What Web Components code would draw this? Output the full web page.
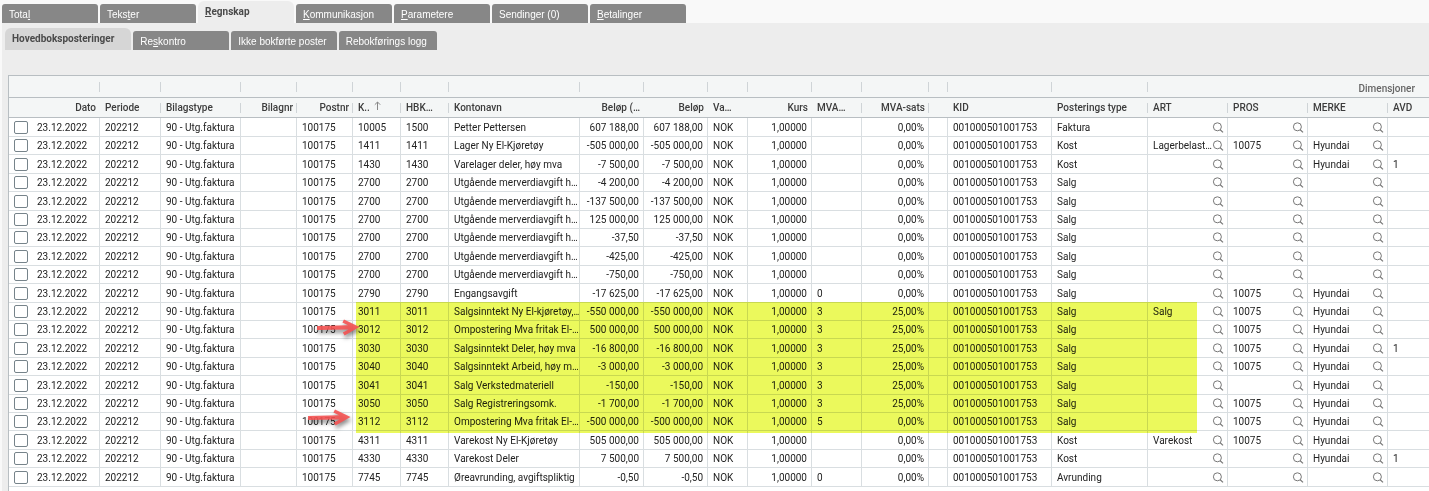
<!DOCTYPE html>
<html lang="no">
<head>
<meta charset="utf-8">
<title>Regnskap</title>
<style>
  html, body {
    margin: 0;
    height: 100%;
  }
  body {
    font: 10px/14px Roboto, "Liberation Sans", sans-serif;
    color: #222;
    background: #f9f9f9;
  }
</style>
</head>
<body>
<ledger-page>
  <tab-strip slot="main">
    <tab-item>Tota<u>l</u></tab-item>
    <tab-item>Teks<u>t</u>er</tab-item>
    <tab-item active><u>R</u>egnskap</tab-item>
    <tab-item><u>K</u>ommunikasjon</tab-item>
    <tab-item><u>P</u>arametere</tab-item>
    <tab-item>Sendinger (0)</tab-item>
    <tab-item><u>B</u>etalinger</tab-item>
  </tab-strip>
  <tab-strip slot="sub" level="2">
    <tab-item active>Hovedboksposteringer</tab-item>
    <tab-item>Re<u>s</u>kontro</tab-item>
    <tab-item>Ikke bokførte poster</tab-item>
    <tab-item>Rebokførings logg</tab-item>
  </tab-strip>
  <posting-grid>
    <marker-box style="left: 347px; top: 226px; width: 841px; height: 131px"></marker-box>
    <marker-arrow style="left: 308px; top: 242px"></marker-arrow>
    <marker-arrow style="left: 299px; top: 332px"></marker-arrow>
  </posting-grid>
</ledger-page>

<script>
class LedgerPage extends HTMLElement {
    constructor() {
        super();
        this.attachShadow({ mode: 'open' });
        this.shadowRoot.innerHTML = `
        <style>
        :host {
            display: flex;
            flex-direction: column;
            box-sizing: border-box;
            min-height: 100%;
            padding-left: 2px;
            overflow: hidden;
        }
        main {
            flex: 1;
            display: flex;
            flex-direction: column;
            gap: 25px;
            padding: 5px 0 0 6px;
            background: #ededed;
        }
        .sub {
            margin-left: -3px;
        }
        </style>
        <slot name="main"></slot>
        <main>
            <div class="sub"><slot name="sub"></slot></div>
            <slot></slot>
        </main>
        `;
    }
}

class TabStrip extends HTMLElement {
    constructor() {
        super();
        this.attachShadow({ mode: 'open' });
        this.shadowRoot.innerHTML = `
        <style>
        :host {
            display: flex;
            align-items: flex-end;
            gap: 2px;
            height: 23px;
            --active-bg: #ededed;
        }
        :host([level="2"]) {
            height: 22px;
            --active-bg: #d6d6d6;
        }
        </style>
        <slot></slot>
        `;
    }
}

class TabItem extends HTMLElement {
    constructor() {
        super();
        this.attachShadow({ mode: 'open' });
        this.shadowRoot.innerHTML = `
        <style>
        :host {
            display: block;
        }
        button {
            display: block;
            box-sizing: border-box;
            min-width: 96px;
            height: 19px;
            margin: 0;
            padding: 3px 10px 0 7px;
            border: 0;
            border-radius: 3px 3px 0 0;
            background: #878787;
            color: #fff;
            font: 10px/14px "Liberation Sans", Arial, sans-serif;
            text-align: left;
            white-space: nowrap;
        }
        :host([active]) button {
            height: 22px;
            padding: 0 17px 1px 7px;
            border-radius: 6px 6px 0 0;
            background: var(--active-bg);
            color: #4a4a4a;
            font: 700 10px/14px Roboto, sans-serif;
        }
        </style>
        <button type="button"><slot></slot></button>
        `;
    }
}

// [title, width, align, separator in the title row]
const columns = [
    ['Dato', 91, 'right', false],
    ['Periode', 61, 'left', true],
    ['Bilagstype', 80, 'left', true],
    ['Bilagnr', 56, 'right', true],
    ['Postnr', 56, 'right', true],
    ['K..', 48, 'left', true],
    ['HBK…', 48, 'left', true],
    ['Kontonavn', 131, 'left', false],
    ['Beløp (…', 64, 'right', false],
    ['Beløp', 64, 'right', false],
    ['Va…', 40, 'left', false],
    ['Kurs', 64, 'right', false],
    ['MVA…', 50, 'left', true],
    ['MVA-sats', 67, 'right', true],
    ['', 19, 'left', false],
    ['KID', 104, 'left', false],
    ['Posterings type', 96, 'left', true],
    ['ART', 80, 'left', true],
    ['PROS', 80, 'left', true],
    ['MERKE', 80, 'left', true],
    ['AVD', 0, 'left', false],
];

// account, main account, name, amount, VAT code, VAT rate, type, ART, PROS, MERKE, AVD
const postings = [
    ['10005', '1500', 'Petter Pettersen', '607 188,00', '', '0,00%', 'Faktura', '', '', '', ''],
    ['1411', '1411', 'Lager Ny El-Kjøretøy', '-505 000,00', '', '0,00%', 'Kost', 'Lagerbelast…', '10075', 'Hyundai', ''],
    ['1430', '1430', 'Varelager deler, høy mva', '-7 500,00', '', '0,00%', 'Kost', '', '', 'Hyundai', '1'],
    ['2700', '2700', 'Utgående merverdiavgift h…', '-4 200,00', '', '0,00%', 'Salg', '', '', '', ''],
    ['2700', '2700', 'Utgående merverdiavgift h…', '-137 500,00', '', '0,00%', 'Salg', '', '', '', ''],
    ['2700', '2700', 'Utgående merverdiavgift h…', '125 000,00', '', '0,00%', 'Salg', '', '', '', ''],
    ['2700', '2700', 'Utgående merverdiavgift h…', '-37,50', '', '0,00%', 'Salg', '', '', '', ''],
    ['2700', '2700', 'Utgående merverdiavgift h…', '-425,00', '', '0,00%', 'Salg', '', '', '', ''],
    ['2700', '2700', 'Utgående merverdiavgift h…', '-750,00', '', '0,00%', 'Salg', '', '', '', ''],
    ['2790', '2790', 'Engangsavgift', '-17 625,00', '0', '0,00%', 'Salg', '', '10075', 'Hyundai', ''],
    ['3011', '3011', 'Salgsinntekt Ny El-kjøretøy,…', '-550 000,00', '3', '25,00%', 'Salg', 'Salg', '10075', 'Hyundai', ''],
    ['3012', '3012', 'Ompostering Mva fritak El-…', '500 000,00', '3', '25,00%', 'Salg', '', '10075', 'Hyundai', ''],
    ['3030', '3030', 'Salgsinntekt Deler, høy mva', '-16 800,00', '3', '25,00%', 'Salg', '', '10075', 'Hyundai', '1'],
    ['3040', '3040', 'Salgsinntekt Arbeid, høy m…', '-3 000,00', '3', '25,00%', 'Salg', '', '10075', 'Hyundai', ''],
    ['3041', '3041', 'Salg Verkstedmateriell', '-150,00', '3', '25,00%', 'Salg', '', '', 'Hyundai', ''],
    ['3050', '3050', 'Salg Registreringsomk.', '-1 700,00', '3', '25,00%', 'Salg', '', '10075', 'Hyundai', ''],
    ['3112', '3112', 'Ompostering Mva fritak El-…', '-500 000,00', '5', '0,00%', 'Salg', '', '10075', 'Hyundai', ''],
    ['4311', '4311', 'Varekost Ny El-Kjøretøy', '505 000,00', '', '0,00%', 'Kost', 'Varekost', '10075', 'Hyundai', ''],
    ['4330', '4330', 'Varekost Deler', '7 500,00', '', '0,00%', 'Kost', '', '', 'Hyundai', '1'],
    ['7745', '7745', 'Øreavrunding, avgiftspliktig', '-0,50', '0', '0,00%', 'Avrunding', '', '', '', ''],
];

class SearchButton extends HTMLElement {
    constructor() {
        super();
        this.attachShadow({ mode: 'open' });
        this.shadowRoot.innerHTML = `
        <style>
        :host {
            display: block;
            flex: none;
        }
        button {
            display: block;
            margin: 0;
            padding: 0;
            border: 0;
            background: none;
        }
        svg {
            display: block;
        }
        </style>
        <button type="button" aria-label="Søk">
            <svg width="12" height="12" viewBox="0 0 12 12" fill="none" stroke="#777">
                <circle cx="5.4" cy="4.8" r="4"/>
                <path d="M8.2 7.7 11 10.4" stroke-width="1.2"/>
            </svg>
        </button>
        `;
    }
}

class PostingGrid extends HTMLElement {
    constructor() {
        super();
        this.attachShadow({ mode: 'open' });
        this.shadowRoot.innerHTML = `
        <style>
        :host {
            display: block;
            position: relative;
            flex: 1;
            border: solid #b8bec2;
            border-width: 1px 0 0 1px;
            background: #fff;
        }
        table {
            width: 100%;
            table-layout: fixed;
            border-collapse: separate;
            border-spacing: 0;
        }
        th, td {
            box-sizing: border-box;
            padding: 0 4px 0 5px;
            text-align: left;
            white-space: nowrap;
            overflow: hidden;
        }
        th {
            height: 20px;
            border-bottom: 1px solid #b8bec2;
            background: #f4f6f6;
            color: #3c3c3c;
            font-weight: 500;
        }
        .groups th {
            height: 22px;
        }
        .groups .dim {
            padding: 4px 14px 0 0;
            text-align: right;
            color: #666;
        }
        th.sep {
            background: linear-gradient(#cfd4d7, #cfd4d7) right center / 1px 10px no-repeat #f4f6f6;
        }
        td {
            height: 18px;
            border: solid #d9dee1;
            border-width: 0 1px 1px 0;
            line-height: 14px;
        }
        td:last-child {
            border-right: 0;
        }
        tr:first-child td, tr:nth-child(5n) td, tr:nth-child(5n + 3) td {
            height: 19px;
            padding-top: 1px;
        }
        th.right, td.right {
            text-align: right;
        }
        td.find {
            padding-right: 3px;
        }
        .pick, .look, .sort {
            display: flex;
            align-items: center;
        }
        .pick {
            gap: 9px;
        }
        .look {
            justify-content: space-between;
        }
        .sort {
            align-items: flex-start;
            gap: 4px;
        }
        input {
            appearance: none;
            flex: none;
            box-sizing: border-box;
            width: 14px;
            height: 13px;
            margin: 0;
            border: 1px solid #76838a;
            border-radius: 2px;
            background: #fff;
        }
        </style>
        <table>
            <colgroup>${columns.map(c => `<col${c[1] ? ` style="width: ${c[1]}px"` : ''}>`).join('')}</colgroup>
            <thead>
                <tr class="groups">
                    ${'<th class="sep"></th>'.repeat(17)}
                    <th class="dim" colspan="4">Dimensjoner</th>
                </tr>
                <tr>${columns.map(this._heading).join('')}</tr>
            </thead>
            <tbody>${postings.map(this._row).join('')}</tbody>
        </table>
        <slot></slot>
        `;
    }

    _heading([title, width, align, sep]) {
        const arrow = `<svg width="8" height="10" viewBox="0 0 8 10" fill="none" stroke="#888"><path d="M3.5 9V1M.8 3.7 3.5 1 6.2 3.7"/></svg>`;
        const text = title === 'K..' ? `<div class="sort">${title}${arrow}</div>` : title;
        return `<th class="${align}${sep ? ' sep' : ''}">${text}</th>`;
    }

    _row([account, main, name, amount, code, rate, type, art, pros, brand, dept]) {
        const td = (text, align = 'left') => `<td class="${align}">${text}</td>`;
        const look = text => `<td class="find"><div class="look"><span>${text}</span><search-button></search-button></div></td>`;
        return `<tr>
            <td><label class="pick"><input type="checkbox">23.12.2022</label></td>
            ${td('202212')}${td('90 - Utg.faktura')}${td('')}${td('100175')}
            ${td(account)}${td(main)}${td(name)}
            ${td(amount, 'right')}${td(amount, 'right')}
            ${td('NOK')}${td('1,00000', 'right')}${td(code)}${td(rate, 'right')}
            ${td('')}${td('001000501001753')}${td(type)}
            ${look(art)}${look(pros)}${look(brand)}${td(dept)}
        </tr>`;
    }
}

class MarkerBox extends HTMLElement {
    constructor() {
        super();
        this.attachShadow({ mode: 'open' });
        this.shadowRoot.innerHTML = `
        <style>
        :host {
            display: block;
            position: absolute;
            background: #ebf95c;
            mix-blend-mode: multiply;
            pointer-events: none;
        }
        </style>
        `;
    }
}

class MarkerArrow extends HTMLElement {
    constructor() {
        super();
        this.attachShadow({ mode: 'open' });
        this.shadowRoot.innerHTML = `
        <style>
        :host {
            display: block;
            position: absolute;
            pointer-events: none;
        }
        svg {
            display: block;
            overflow: visible;
            filter: drop-shadow(1px 3px 2px rgba(0, 0, 0, .5));
        }
        </style>
        <svg width="44" height="20" viewBox="0 0 44 20">
            <path d="M0 8 31 7.2 25.4 4.4 27 1.6 42.5 9 27.6 17.4 25.8 14.4 31.5 11.4 0 12Z" fill="#f45252" fill-opacity=".9"/>
        </svg>
        `;
    }
}

customElements.define('search-button', SearchButton);
customElements.define('marker-box', MarkerBox);
customElements.define('marker-arrow', MarkerArrow);
customElements.define('posting-grid', PostingGrid);
customElements.define('tab-item', TabItem);
customElements.define('tab-strip', TabStrip);
customElements.define('ledger-page', LedgerPage);
</script>
</body>
</html>
